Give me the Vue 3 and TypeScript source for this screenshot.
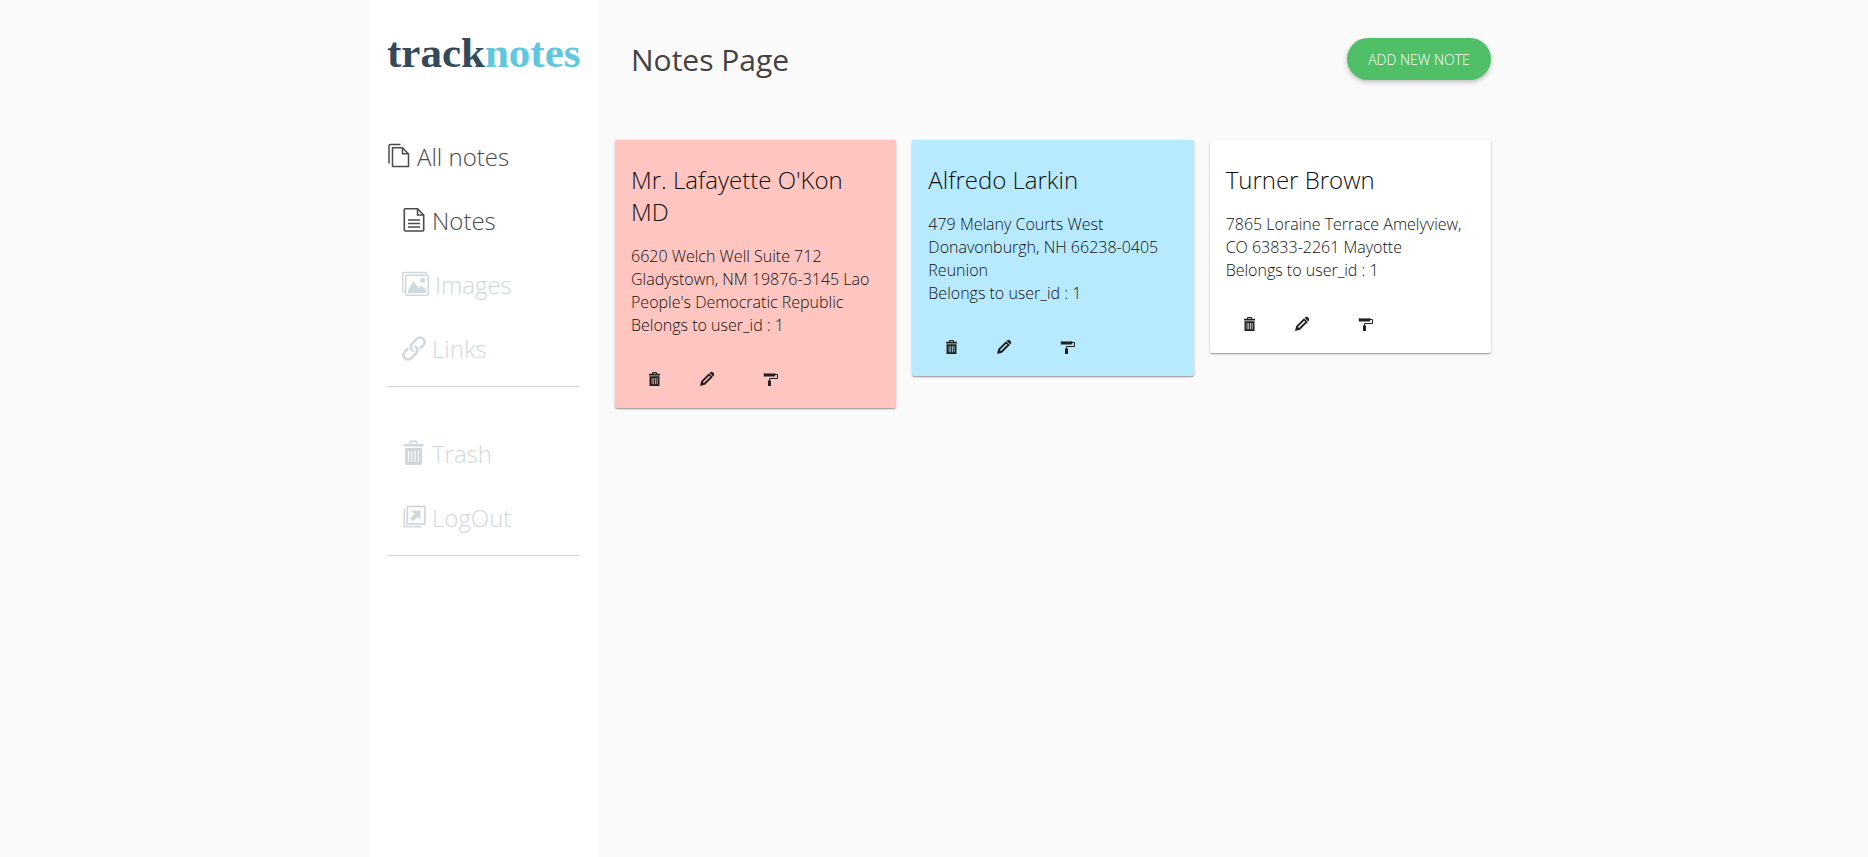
<script setup lang="ts">
interface NavItem {
  label: string
  icon: string
  tone: 'dark' | 'muted'
  nested: boolean
}

interface Note {
  id: number
  title: string
  body: string
  userId: number
  color: 'red' | 'blue' | 'plain'
}

const navGroups: NavItem[][] = [
  [
    { label: 'All notes', icon: 'copies', tone: 'dark', nested: false },
    { label: 'Notes', icon: 'page', tone: 'dark', nested: true },
    { label: 'Images', icon: 'images', tone: 'muted', nested: true },
    { label: 'Links', icon: 'link', tone: 'muted', nested: true },
  ],
  [
    { label: 'Trash', icon: 'trash', tone: 'muted', nested: true },
    { label: 'LogOut', icon: 'logout', tone: 'muted', nested: true },
  ],
]

const notes: Note[] = [
  {
    id: 1,
    title: "Mr. Lafayette O'Kon MD",
    body: "6620 Welch Well Suite 712 Gladystown, NM 19876-3145 Lao People's Democratic Republic",
    userId: 1,
    color: 'red',
  },
  {
    id: 2,
    title: 'Alfredo Larkin',
    body: '479 Melany Courts West Donavonburgh, NH 66238-0405 Reunion',
    userId: 1,
    color: 'blue',
  },
  {
    id: 3,
    title: 'Turner Brown',
    body: '7865 Loraine Terrace Amelyview, CO 63833-2261 Mayotte',
    userId: 1,
    color: 'plain',
  },
]
</script>

<template>
  <div class="shell">
    <aside class="sidebar">
      <a class="logo" href="#"><span class="logo-dark">track</span><span class="logo-light">notes</span></a>
      <nav aria-label="Main">
        <ul v-for="(group, g) in navGroups" :key="g" class="group">
          <li v-for="item in group" :key="item.label">
            <a href="#" class="nav-link" :class="[item.tone, { nested: item.nested }]">
              <svg v-if="item.icon === 'copies'" class="nav-icon" viewBox="0 0 24 26" aria-hidden="true">
                <path d="M2 20.5V3Q2 1.500 3.500 1.500H13.500" fill="none" stroke="currentColor" stroke-width="1.500" />
                <path d="M5.500 4.700H15.500L21.500 11V23.500H5.500Z" fill="none" stroke="currentColor" stroke-width="1.500" stroke-linejoin="round" />
                <path d="M15.500 4.700V10.700H21.500" fill="none" stroke="currentColor" stroke-width="1.500" />
              </svg>
              <svg v-else-if="item.icon === 'page'" class="nav-icon" viewBox="0 0 24 26" aria-hidden="true">
                <path d="M3.300 1.700H15.500L21.700 8V23Q21.700 24 20.700 24H3.300Q2.300 24 2.300 23V2.700Q2.300 1.700 3.300 1.700Z" fill="none" stroke="currentColor" stroke-width="1.600" />
                <path d="M15.500 1.700V8H21.700M6 13H18M6 16.500H18M6 20H18" fill="none" stroke="currentColor" stroke-width="1.500" />
              </svg>
              <svg v-else-if="item.icon === 'images'" class="nav-icon wide" viewBox="0 0 27 26" aria-hidden="true">
                <path d="M3 21H1.500Q.700 21 .700 20V2.500Q.700 1.500 1.700 1.500H23.300Q24.300 1.500 24.300 2.500V3.500" fill="none" stroke="currentColor" stroke-width="1.500" />
                <rect x="3.700" y="4.300" width="22.500" height="20" rx="1" fill="none" stroke="currentColor" stroke-width="1.500" />
                <path d="M6 22V20L11.500 10L16.500 17L19.500 14.500L24 19V22Z" fill="currentColor" />
                <circle cx="20.500" cy="9.200" r="2.500" fill="currentColor" />
              </svg>
              <svg v-else-if="item.icon === 'link'" class="nav-icon" viewBox="0 0 24 26" aria-hidden="true">
                <g fill="none" stroke="currentColor" stroke-width="2.500" stroke-linecap="round" stroke-linejoin="round">
                  <path d="M10.500 15.500C8 13 8.200 10.500 10 8.700L14.500 4.200C16.600 2 19.300 2 21.200 3.900S23 8.400 21 10.500L18.500 13" />
                  <path d="M13.500 11.500C16 14 15.800 16.500 14 18.300L9.500 22.800C7.400 25 4.700 25 2.800 23.100S1 18.600 3 16.500L5.500 14" />
                </g>
              </svg>
              <svg v-else-if="item.icon === 'trash'" class="nav-icon" viewBox="0 0 24 26" aria-hidden="true">
                <path d="M7.500 4V2Q7.500 .500 9 .500H14Q15.500 .500 15.500 2V4H21.500V6.500H1.500V4ZM9.200 4H13.800V2.200H9.200Z" fill="currentColor" fill-rule="evenodd" />
                <path d="M3 8H20V23Q20 25 18 25H5Q3 25 3 23ZM6 11V22H7V11ZM9.200 11V22H10.200V11ZM12.600 11V22H13.600V11ZM16 11V22H17V11Z" fill="currentColor" fill-rule="evenodd" />
              </svg>
              <svg v-else class="nav-icon" viewBox="0 0 24 26" aria-hidden="true">
                <path d="M2.300 4.500V22.800H19.500" fill="none" stroke="currentColor" stroke-width="1.500" />
                <rect x="5.300" y="2.500" width="17.500" height="17.500" fill="none" stroke="currentColor" stroke-width="1.800" />
                <path d="M9 6.500H18.500V16L15.500 13L11 17.500L8 14.500L12.500 10Z" fill="currentColor" />
              </svg>
              <span>{{ item.label }}</span>
            </a>
          </li>
        </ul>
      </nav>
    </aside>

    <main class="content">
      <header class="page-head">
        <h1>Notes Page</h1>
        <button type="button" class="add">ADD NEW NOTE</button>
      </header>

      <section class="cards" aria-label="Notes">
        <article v-for="note in notes" :key="note.id" class="card" :class="note.color">
          <h2>{{ note.title }}</h2>
          <p>{{ note.body }}</p>
          <p>Belongs to user_id : {{ note.userId }}</p>
          <div class="actions">
            <button type="button" aria-label="Delete note">
              <svg viewBox="0 0 16 16" aria-hidden="true">
                <path d="M5 2.800V2Q5 1 6 1H9Q10 1 10 2V2.800H13V4.500H2V2.800ZM6.200 2.800H8.800V2H6.200Z" fill="currentColor" fill-rule="evenodd" />
                <path d="M2.500 5.200H12.500V15H2.500ZM4.700 7V13.300H5.400V7ZM6.400 7V13.300H7.100V7ZM8.100 7V13.300H8.800V7ZM9.800 7V13.300H10.500V7Z" fill="currentColor" fill-rule="evenodd" />
              </svg>
            </button>
            <button type="button" aria-label="Edit note">
              <svg viewBox="0 0 16 16" aria-hidden="true">
                <path d="M1 15L2.200 10L10 2.200L13.800 6L6 13.800ZM3.900 11L4.900 12.100L11.300 5.800L10.200 4.700Z" fill="currentColor" fill-rule="evenodd" />
                <path d="M10.600 1.800L11.600 .900Q13 .300 14.200 1.500T15.100 4.400L14.200 5.400Z" fill="currentColor" />
              </svg>
            </button>
            <button type="button" class="paint" aria-label="Change color">
              <svg viewBox="0 0 16 16" aria-hidden="true">
                <path d="M.800 2H12.200V5.500H.800Z" fill="currentColor" />
                <path d="M1.500 2.500H11.500" stroke="#fff" stroke-opacity=".4" />
                <path d="M12 3.500H14.500V7.500H6.500V10" fill="none" stroke="currentColor" />
                <path d="M5 9.500H8V15H5Z" fill="currentColor" />
              </svg>
            </button>
          </div>
        </article>
      </section>
    </main>
  </div>
</template>

<style>
body {
  background: #fafafa;
}
</style>

<style scoped>
.shell {
  display: flex;
  box-sizing: border-box;
  width: 100%;
  max-width: 1130px;
  min-height: 100vh;
  margin: 0 auto;
  font-family: "Open Sans", "Noto Sans", sans-serif;
  font-weight: 300;
  color: #111;
}

.sidebar {
  box-sizing: border-box;
  flex: 0 0 228px;
  min-width: 0;
  padding: 29px 18px 0;
  background: #fff;
}

.logo {
  display: block;
  margin-bottom: 48px;
  font-family: "Liberation Serif", serif;
  font-size: 43px;
  font-weight: 700;
  line-height: 48px;
  white-space: nowrap;
  text-decoration: none;
}

.logo-dark {
  color: #34495a;
}

.logo-light {
  color: #5ec8e0;
}

.group {
  margin: 0 0 35px;
  padding: 0 0 5px;
  border-bottom: 1px solid #cfd8dc;
  list-style: none;
}

.nav-link {
  display: flex;
  align-items: center;
  gap: 6px;
  font-size: 24px;
  line-height: 64px;
  text-decoration: none;
}

.nav-link.nested {
  padding-left: 15px;
}

.dark {
  color: #4a4a4a;
}

.muted {
  color: #cfd8dc;
}

.nav-icon {
  flex: none;
  width: 24px;
  height: 26px;
  margin-bottom: 2px;
}

.nav-icon.wide {
  width: 27px;
}

.content {
  flex: 1;
  min-width: 0;
  padding: 38px 8px 0 18px;
}

.page-head {
  display: flex;
  align-items: center;
  justify-content: space-between;
  height: 42px;
  margin-bottom: 60px;
  padding-left: 16px;
}

h1 {
  margin: 0;
  padding-top: 2px;
  font-size: 30px;
  font-weight: 400;
  line-height: 42px;
  color: #424242;
}

.add {
  min-width: 144px;
  height: 42px;
  padding: 0 20px;
  border: 0;
  border-radius: 21px;
  background: #50bf68;
  box-shadow: 0 2px 5px rgba(0, 0, 0, 0.26);
  color: #fff;
  font-family: inherit;
  font-size: 14px;
  font-weight: 300;
  cursor: pointer;
}

.cards {
  display: grid;
  grid-template-columns: repeat(3, minmax(0, 1fr));
  align-items: start;
  gap: 16px;
}

.card {
  padding: 24px 16px 21px;
  border-radius: 2px;
  background: #fff;
  box-shadow: 0 1px 3px 0 rgba(0, 0, 0, 0.2), 0 1px 1px 0 rgba(0, 0, 0, 0.14), 0 2px 1px -1px rgba(0, 0, 0, 0.12);
}

.card.red {
  background: #ffc5c0;
}

.card.blue {
  background: #b8eaff;
}

h2 {
  margin: 0 0 17px;
  font-size: 24px;
  font-weight: 300;
  line-height: 32px;
}

p {
  margin: 0;
  font-size: 16px;
  line-height: 23px;
}

.actions {
  display: flex;
  gap: 36px;
  margin-top: 34px;
  padding-left: 16px;
}

.actions button {
  width: 16px;
  height: 16px;
  padding: 0;
  border: 0;
  background: none;
  color: #212121;
  cursor: pointer;
}

.actions svg {
  display: block;
  width: 16px;
  height: 16px;
}

.actions .paint {
  margin-left: 12px;
}
</style>
